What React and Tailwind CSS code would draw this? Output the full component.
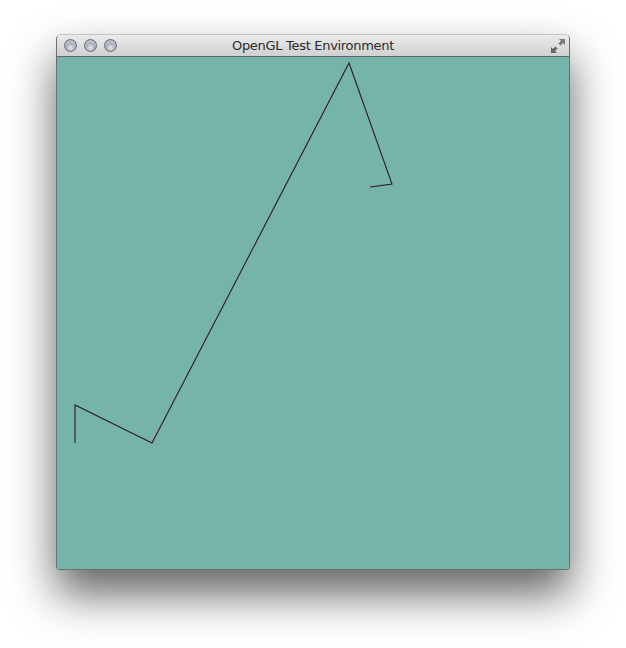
import React from "react";

const points = [
  [18, 386],
  [18, 348],
  [95, 386],
  [292, 6],
  [335, 127],
  [313, 130],
];

const TrafficLight = () => (
  <div className="w-[13px] h-[13px] rounded-full border border-[#666b74] bg-[radial-gradient(circle_at_50%_70%,#e4e8ee_0%,#a3aab6_50%,#77808d_100%)] shadow-[inset_0_2px_2px_rgba(255,255,255,0.5)]" />
);

const ResizeIcon = () => (
  <svg width="16" height="16" viewBox="0 0 16 16">
    <path d="M9.5 6.5 L12.5 3.5" stroke="#7a7a7a" strokeWidth="3" />
    <path d="M9 1 L15 1 L15 7 Z" fill="#7a7a7a" />
    <path d="M6.5 9.5 L3.5 12.5" stroke="#666" strokeWidth="3" />
    <path d="M1 9 L1 15 L7 15 Z" fill="#666" />
  </svg>
);

export default function App() {
  return (
    <div className="w-[626px] h-[648px] bg-white pt-[34px]">
      <div className="mx-auto w-[514px] rounded-t-[5px] rounded-b-[3px] border border-[#6e6e6e] border-t-[#c4c4c4] shadow-[0_24px_45px_rgba(0,0,0,0.62)] overflow-hidden">
        <div className="relative h-[22px] flex items-center justify-center bg-gradient-to-b from-[#ebebeb] to-[#d0d0d0] border-b border-[#666]">
          <div className="absolute left-[7px] top-[4px] flex gap-[7px]">
            <TrafficLight />
            <TrafficLight />
            <TrafficLight />
          </div>
          <span className="text-[13px] text-[#2a2a2a] font-['DejaVu_Sans',sans-serif] tracking-[-0.3px]">
            OpenGL Test Environment
          </span>
          <div className="absolute right-[3px] top-[3px]">
            <ResizeIcon />
          </div>
        </div>
        <div className="w-[512px] h-[512px] bg-[#75b3ab]">
          <svg width="512" height="512">
            <polyline
              points={points.map((p) => p.join(",")).join(" ")}
              fill="none"
              stroke="#35182f"
              strokeWidth="1.1"
            />
          </svg>
        </div>
      </div>
    </div>
  );
}
